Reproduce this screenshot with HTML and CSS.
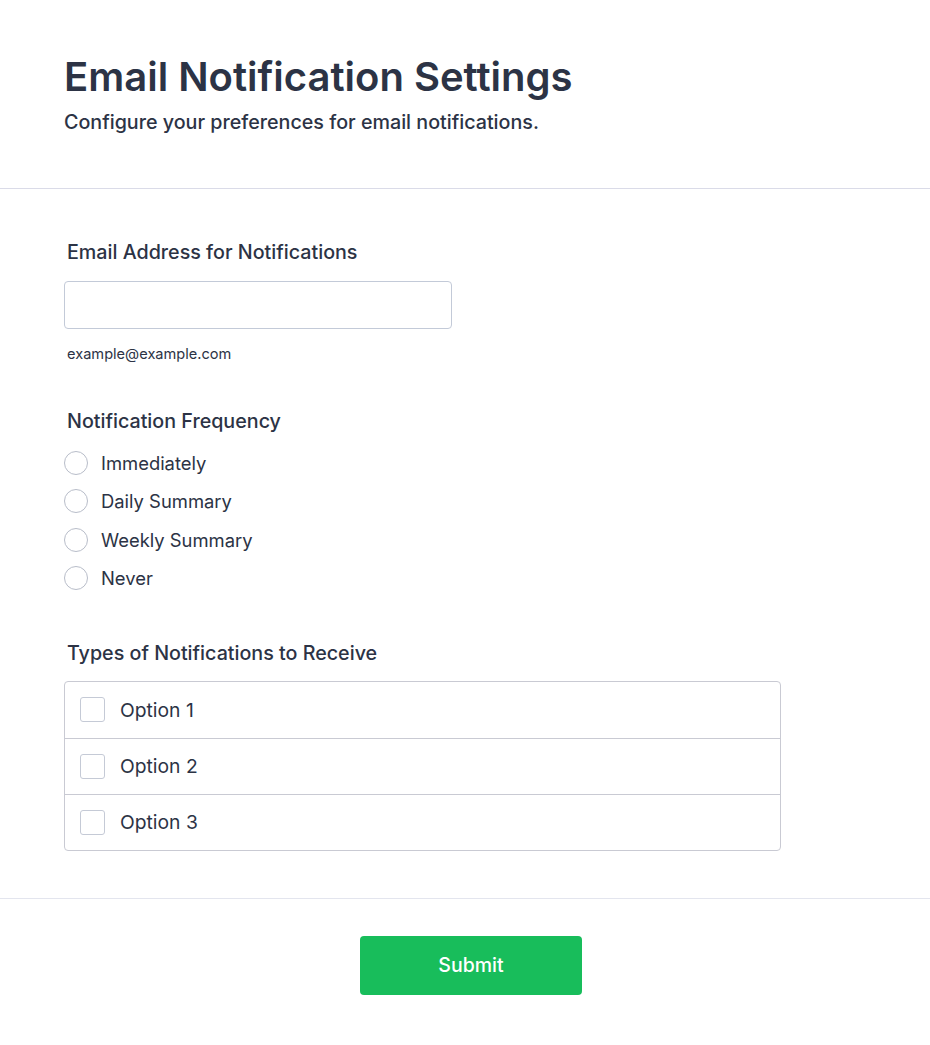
FILE: index.html
```html
<!DOCTYPE html>
<html lang="en">
<head>
<meta charset="utf-8">
<title>Email Notification Settings</title>
<link rel="stylesheet" href="styles.css">
</head>
<body>
<form class="form">
  <header class="header">
    <h1 class="title">Email Notification Settings</h1>
    <p class="subtitle">Configure your preferences for email notifications.</p>
  </header>
  <section class="fields">
    <div class="field">
      <label class="label" for="email">Email Address for Notifications</label>
      <input class="input" id="email" type="email">
      <span class="hint">example@example.com</span>
    </div>
    <div class="field field-radio">
      <span class="label">Notification Frequency</span>
      <div class="radios">
        <label class="radio"><span class="circle"></span>Immediately</label>
        <label class="radio"><span class="circle"></span>Daily Summary</label>
        <label class="radio"><span class="circle"></span>Weekly Summary</label>
        <label class="radio"><span class="circle"></span>Never</label>
      </div>
    </div>
    <div class="field field-check">
      <span class="label">Types of Notifications to Receive</span>
      <div class="checklist">
        <label class="check"><span class="box"></span>Option 1</label>
        <label class="check"><span class="box"></span>Option 2</label>
        <label class="check"><span class="box"></span>Option 3</label>
      </div>
    </div>
  </section>
  <footer class="footer">
    <button type="button" class="submit">Submit</button>
  </footer>
</form>
</body>
</html>
```
FILE: styles.css
```css
* { box-sizing: border-box; }
html, body { margin: 0; padding: 0; background: #fff; }
body {
  font-family: Inter, "Noto Sans", sans-serif;
  color: #2c3345;
}
.form { width: 930px; }
.header {
  padding: 54px 64px 0;
  height: 189px;
  border-bottom: 1px solid #dadbe8;
}
.title {
  margin: 0;
  font-size: 40px;
  line-height: 46px;
  font-weight: 600;
}
.subtitle {
  margin: 10px 0 0;
  font-size: 19.7px;
  line-height: 24px;
  font-weight: 500;
}
.fields {
  padding: 51px 64px 47px;
  border-bottom: 1px solid #e3e5ee;
  display: flex;
  flex-direction: column;
}
.field { display: flex; flex-direction: column; }
.label {
  padding-left: 3px;
  font-size: 19.7px;
  line-height: 24px;
  font-weight: 500;
  color: #2c3345;
}
.input {
  margin-top: 17px;
  width: 388px;
  height: 48px;
  border: 1px solid #c3cad8;
  border-radius: 4px;
  font: inherit;
}
.hint {
  padding-left: 3px;
  margin-top: 17px;
  font-size: 14.6px;
  line-height: 16px;
  color: #2c3345;
}
.field-radio { margin-top: 47px; }
.radios {
  margin-top: 18px;
  display: flex;
  flex-direction: column;
  gap: 14.3px;
}
.radio {
  display: flex;
  align-items: center;
  gap: 13px;
  font-size: 18.4px;
  line-height: 24px;
  color: #2c3345;
}
.circle {
  width: 24px;
  height: 24px;
  border-radius: 50%;
  border: 1px solid #b8bdc9;
  background: #fff;
}
.field-check { margin-top: 51px; }
.checklist {
  margin-top: 16px;
  width: 717px;
  border: 1px solid #c9cad3;
  border-radius: 4px;
  display: flex;
  flex-direction: column;
}
.check {
  height: 56px;
  display: flex;
  align-items: center;
  padding-left: 15px;
  gap: 15px;
  font-size: 19.3px;
  color: #2c3345;
  border-top: 1px solid #c9cad3;
}
.check:first-child { border-top: 0; }
.box {
  width: 25px;
  height: 25px;
  border: 1px solid #c5cad6;
  border-radius: 3px;
  background: #fff;
}
.footer {
  display: flex;
  justify-content: center;
  padding: 37px 0 50px;
}
.submit {
  width: 222px;
  height: 59px;
  border: 0;
  border-radius: 4px;
  background: #18bd5b;
  color: #fff;
  font-family: inherit;
  font-size: 19.5px;
  font-weight: 500;
  margin-left: 12px;
}
```
